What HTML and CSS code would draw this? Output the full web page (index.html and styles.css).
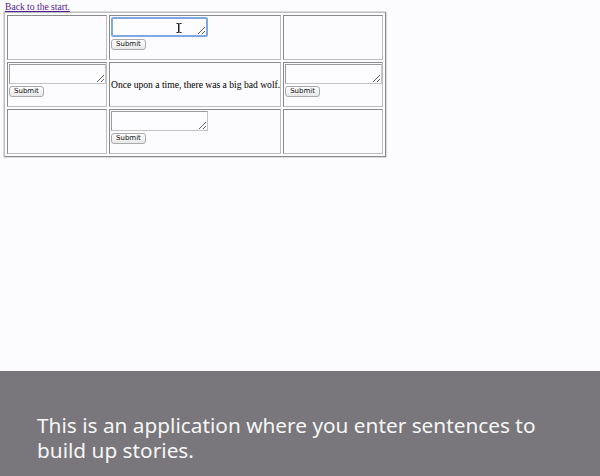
FILE: index.html
```html
<!DOCTYPE html>
<html>
<head>
<meta charset="utf-8">
<link rel="stylesheet" href="styles.css">
</head>
<body>
<a class="back" href="#">Back to the start.</a>
<table class="grid">
  <tr>
    <td class="side"></td>
    <td class="mid">
      <form class="entry">
        <div class="ta-wrap">
          <textarea class="ta focused"></textarea>
          <svg class="ibeam" width="6" height="10" viewBox="0 0 6 10"><path d="M0.5 0.5h2v9h-2M5.5 0.5h-2M5.5 9.5h-2M3 0.5v9" fill="none" stroke="#222" stroke-width="1"/></svg>
        </div>
        <button type="button" class="btn">Submit</button>
      </form>
    </td>
    <td class="side"></td>
  </tr>
  <tr>
    <td class="side">
      <form class="entry">
        <textarea class="ta"></textarea>
        <button type="button" class="btn">Submit</button>
      </form>
    </td>
    <td class="mid story">Once upon a time, there was a big bad wolf.</td>
    <td class="side">
      <form class="entry">
        <textarea class="ta"></textarea>
        <button type="button" class="btn">Submit</button>
      </form>
    </td>
  </tr>
  <tr>
    <td class="side"></td>
    <td class="mid">
      <form class="entry">
        <textarea class="ta"></textarea>
        <button type="button" class="btn">Submit</button>
      </form>
    </td>
    <td class="side"></td>
  </tr>
</table>
<div class="caption">
  <p class="caption-text">This is an application where you enter sentences to build up stories.</p>
</div>
</body>
</html>
```
FILE: styles.css
```css
html, body {
  margin: 0;
  padding: 0;
  height: 100%;
}
body {
  background: #fcfbfe;
  font-family: "Liberation Serif", "Times New Roman", serif;
  font-size: 9.6px;
  color: #000;
  padding: 2px 0 0 5px;
  box-sizing: border-box;
  position: relative;
  overflow: hidden;
}
.back {
  display: block;
  color: #551a8b;
  line-height: 10px;
  height: 10px;
}
.grid {
  margin-left: -1px;
  border: 1px solid;
  border-color: #bdbdbd #8a8a8a #8a8a8a #bdbdbd;
  border-spacing: 2px;
  box-shadow: 0 0 0 0.5px #bbb;
}
.grid td {
  border: 1px solid;
  border-color: #8a8a8a #bdbdbd #bdbdbd #8a8a8a;
  padding: 0 0 0 1px;
  height: 43px;
  vertical-align: middle;
}
.side { width: 97px; }
.mid { width: 169px; }
.story { white-space: nowrap; }
.entry {
  margin: 0 0 9px 0;
  display: flex;
  flex-direction: column;
  align-items: flex-start;
  gap: 2px;
}
.ta-wrap {
  position: relative;
  display: flex;
}
.ta {
  width: 97px;
  height: 20px;
  box-sizing: border-box;
  margin: 0;
  padding: 1px;
  border: 1px solid;
  border-color: #9a9a9a #c4c4c4 #c4c4c4 #9a9a9a;
  background: #fdfcfe;
  resize: both;
  font-size: 9px;
}
.ta.focused {
  border: 2px solid #7fa8e2;
  border-radius: 2px;
  outline: none;
}
.ibeam {
  position: absolute;
  left: 65px;
  top: 6px;
}
.btn {
  font-family: "DejaVu Sans", "Liberation Sans", sans-serif;
  font-size: 7px;
  height: 11px;
  padding: 0 4px;
  line-height: 9px;
  border: 1px solid #a9a9a9;
  border-radius: 3px;
  background: linear-gradient(#ffffff, #e8e8e8);
  color: #111;
  margin: 0;
}
.caption {
  position: absolute;
  left: 0;
  right: 0;
  bottom: 0;
  height: 105px;
  background: #79777b;
  box-sizing: border-box;
  padding: 42px 0 0 37px;
}
.caption-text {
  margin: 0;
  width: 540px;
  font-family: "Noto Sans", "Open Sans", sans-serif;
  font-size: 20.8px;
  line-height: 25px;
  color: #f6f6f6;
}
```
